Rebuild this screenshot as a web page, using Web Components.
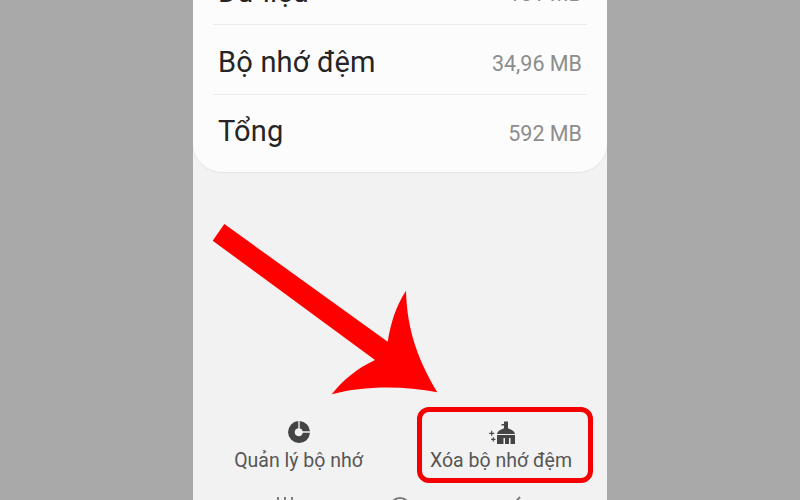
<!DOCTYPE html>
<html lang="vi"><head><meta charset="utf-8"><title>Bộ nhớ</title>
<style>
html,body{margin:0;padding:0;height:500px;overflow:hidden;background:#a9a9a9}
</style></head><body>
<phone-screen>
  <info-card>
    <info-row label="Dữ liệu" value="101 MB"></info-row>
    <info-row label="Bộ nhớ đệm" value="34,96 MB"></info-row>
    <info-row label="Tổng" value="592 MB" last></info-row>
  </info-card>
  <action-bar>
    <action-button label="Quản lý bộ nhớ" icon="pie"></action-button>
    <action-button label="Xóa bộ nhớ đệm" icon="brush" highlight></action-button>
  </action-bar>
  <nav-bar></nav-bar>
  <red-arrow></red-arrow>
</phone-screen>
<script>
const F='Roboto,"Noto Sans",sans-serif';
function def(name,html){customElements.define(name,class extends HTMLElement{
  connectedCallback(){ if(this.shadowRoot)return; const r=this.attachShadow({mode:'open'}); r.innerHTML=typeof html==='function'?html(this):html; }
});}
def('phone-screen',`<style>
:host{display:flex;flex-direction:column;position:relative;width:414px;height:500px;margin:0 auto 0 193px;background:#f2f2f2;overflow:hidden;font-family:${F}}
</style><slot></slot>`);
def('info-card',`<style>
:host{display:block;flex:none;margin-top:-45px;height:217px;padding:0 20px;background:#fcfcfc;border-radius:0 0 29px 29px;box-shadow:0 1px 1px #e4e4e4}
</style><slot></slot>`);
def('info-row',h=>`<style>
:host{display:flex;justify-content:space-between;align-items:center;height:${h.hasAttribute('last')?'77px':'69px'};padding:0 5px;border-bottom:${h.hasAttribute('last')?'0':'1px solid #ececec'}}
.l{font-size:29px;color:#252525;letter-spacing:.2px;margin-top:${h.hasAttribute('last')?'-5px':'4px'}}
.v{font-size:21.5px;color:#8d8d8d;margin-top:${h.hasAttribute('last')?'0':'8px'}}
</style><span class="l">${h.getAttribute('label')}</span><span class="v">${h.getAttribute('value')}</span>`);
def('action-bar',`<style>
:host{display:grid;flex:none;grid-template-columns:202.5px 202.5px;padding-left:4.25px;margin-top:247px;height:77px;align-items:start}
</style><slot></slot>`);
const ICONS={
pie:`<svg width="24" height="24" viewBox="0 0 24 24"><path fill="#444" d="M11.300 1.100A11 11 0 1 0 23 12.800h-7.300A4 4 0 1 1 11.300 8.200zM12.700 1.100V8.300A4 4 0 0 1 15.700 11.300H23A11 11 0 0 0 12.700 1.100z"/></svg>`,
brush:`<svg width="28" height="26" viewBox="0 0 28 26"><path fill="#444" d="M17 2.500h4v6c0 1 .6 1.300 1.500 1.600 2.500.8 4.800 2.200 5.500 4.900H10c.7-2.700 3-4.100 5.500-4.900.9-.3 1.500-.6 1.500-1.600V6.500h-2.500V5H17zM10 16h18v9h-4.500v-6H22v6h-4v-6h-1.500v6H10z"/><path fill="#444" d="M4.100 11.800h1.200v1.900h1.900v1.200H5.300v1.900H4.100v-1.900H2.200v-1.200h1.900zM5.700 18.300h1.200v1.400h1.500v1.200H6.900v1.500H5.700v-1.500H4.200v-1.200h1.500z"/></svg>`};
def('action-button',h=>`<style>
:host{display:flex;flex-direction:column;align-items:center;position:relative;font-size:19.5px;color:#565656;white-space:nowrap}
.i{height:26px;display:flex;align-items:center;justify-content:center}
.t{line-height:24px;margin-top:4px}
.hl{position:absolute;left:17.250px;top:-12px;width:166px;height:66px;border:5px solid #f40000;border-radius:12px}
</style><div class="i">${ICONS[h.getAttribute('icon')]}</div><div class="t">${h.getAttribute('label')}</div>${h.hasAttribute('highlight')?'<div class="hl"></div>':''}`);
def('nav-bar',`<style>
:host{display:grid;flex:none;grid-template-columns:repeat(3,115.500px);justify-items:center;padding-left:33.750px;height:30px}
svg{display:block}
</style>
<svg width="24" height="24" viewBox="0 0 24 24"><path stroke="#7c7c7c" stroke-width="2" d="M5 1v20M12 1v20M19 1v20"/></svg>
<svg width="24" height="24" viewBox="0 0 24 24"><circle cx="12" cy="12" r="10" fill="none" stroke="#7c7c7c" stroke-width="2"/></svg>
<svg width="24" height="24" viewBox="0 0 24 24"><path fill="none" stroke="#7c7c7c" stroke-width="2" d="M16 1 6 12l10 11"/></svg>`);
def('red-arrow',`<style>
:host{position:absolute;left:0;top:0;width:414px;height:500px;pointer-events:none}
</style><svg width="414" height="500" viewBox="193 0 414 500"><path fill="#ff0000" d="M224.300 224 387.700 341.700C391 322 396 306 406 290.700 407 330 418 360 437.300 392.300 405 386 365 385 331.700 394.300 344 379 358 368 375 360L212.700 240.700Z"/></svg>`);
</script></body></html>
